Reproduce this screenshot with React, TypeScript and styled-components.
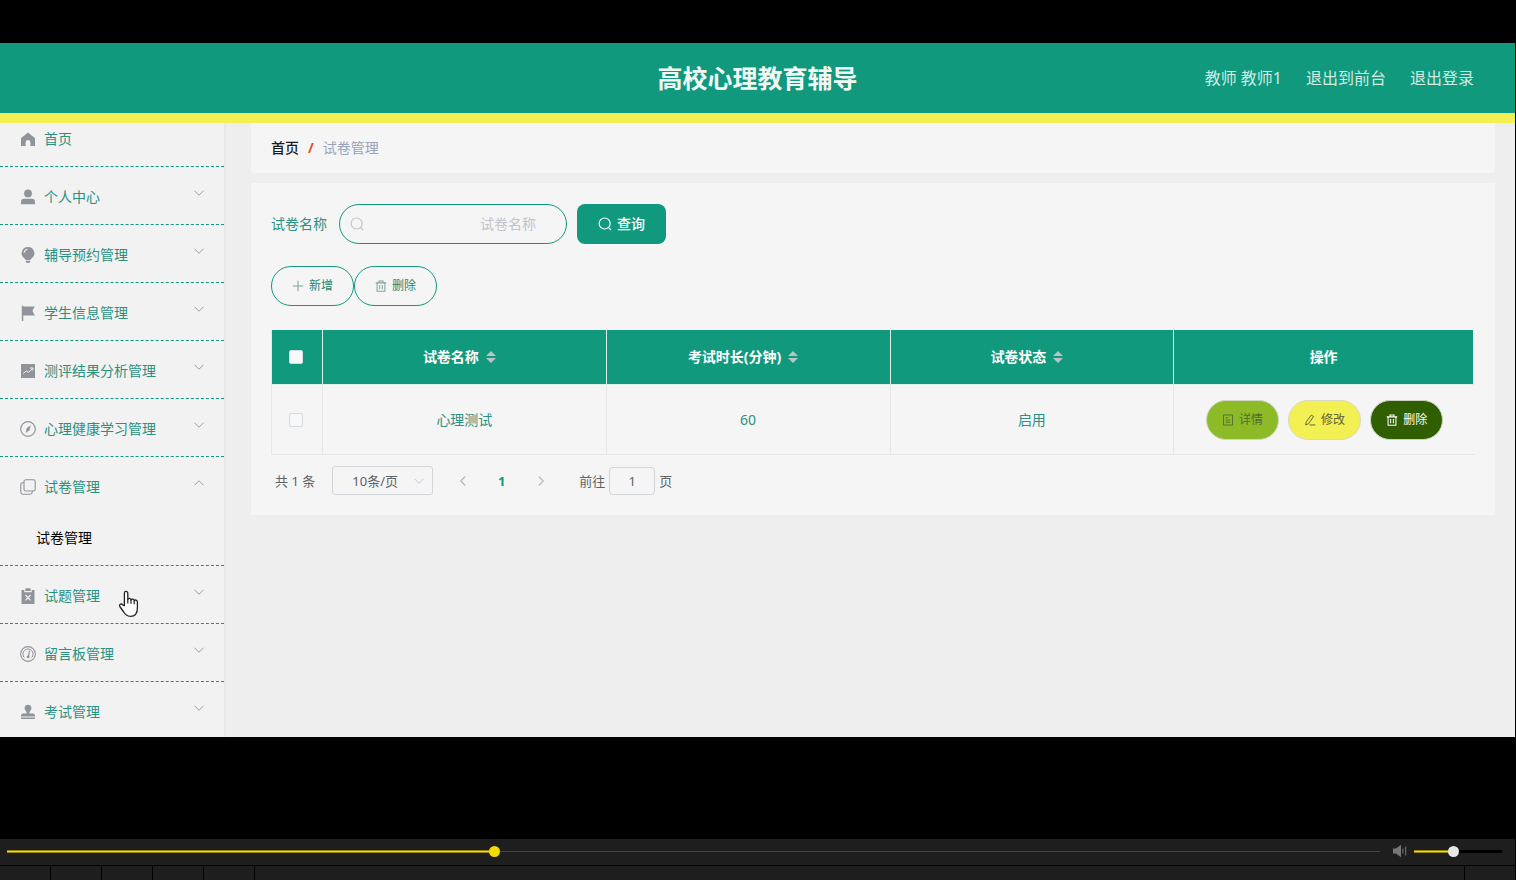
import React, { useState } from 'react';
import styled, { createGlobalStyle, css } from 'styled-components';

const green = '#11997e';
const textGreen = '#2b9080';

const GlobalStyle = createGlobalStyle`
  *, *::before, *::after { box-sizing: border-box; }
  body {
    margin: 0;
    background: #000;
    font-family: 'Noto Sans', 'Noto Sans CJK SC', sans-serif;
    font-size: 14px;
    line-height: 20px;
  }
  button, input, select { font: inherit; color: inherit; margin: 0; }
  button { cursor: pointer; }
`;

/* ---------- player shell ---------- */

const Player = styled.div`
  display: flex;
  flex-direction: column;
  min-height: 100vh;
  padding: 43px 1px 0 0;
  background: #000;
`;

const Stage = styled.div`
  flex: 1;
  padding-bottom: 40px;
`;

const Controls = styled.footer`
  background: #1e1e1e;
`;

const SeekRow = styled.div`
  display: flex;
  align-items: center;
  height: 27px;
  padding: 0 13px 2px 7px;
  border-bottom: 1px solid #000;
`;

const thumb = css<{ $thumb: string }>`
  appearance: none;
  width: 11px;
  height: 11px;
  margin-top: -4px;
  border: 0;
  border-radius: 50%;
  background: ${(p) => p.$thumb};
`;

const Slider = styled.input<{ $thumb: string; $rail: string }>`
  appearance: none;
  display: block;
  height: 12px;
  background: none;
  &::-webkit-slider-runnable-track {
    height: 3px;
    background:
      linear-gradient(#96870a 1px, #f5dc00 1px, #f5dc00 2px, #96870a 2px) 0 0 / var(--fill) 3px no-repeat,
      ${(p) => p.$rail};
  }
  &::-webkit-slider-thumb { ${thumb} }
`;

const Seek = styled(Slider)`
  flex: 1;
  min-width: 0;
`;

const Volume = styled(Slider)`
  width: 88px;
`;

const MuteButton = styled.button`
  display: flex;
  margin: 0 6px 0 12px;
  padding: 0;
  border: 0;
  background: none;
`;

const ToolRow = styled.div`
  display: flex;
  height: 14px;
`;

const ToolCell = styled.div`
  width: 51px;
  border-right: 1px solid #000;
`;

const ToolSpace = styled.div`
  flex: 1;
  border-right: 1px solid #000;
`;

const ToolEnd = styled.div`
  width: 50px;
`;

/* ---------- application ---------- */

const Header = styled.header`
  display: grid;
  grid-template-columns: 1fr auto 1fr;
  align-items: center;
  height: 80px;
  padding: 0 41px;
  border-bottom: 10px solid #f2f053;
  background: ${green};
  color: #f1f8f4;
`;

const Title = styled.h1`
  grid-column: 2;
  margin: 0;
  font-size: 25px;
  line-height: 36px;
  font-weight: 700;
`;

const HeaderLinks = styled.div`
  display: flex;
  justify-content: flex-end;
  gap: 24px;
  font-size: 16px;
  line-height: 24px;
  color: #d3ebe0;
  a { color: inherit; text-decoration: none; }
`;

const Body = styled.div`
  display: flex;
  background: #eeeeee;
`;

const Sidebar = styled.nav`
  width: 226px;
  flex: none;
  overflow: hidden;
  border-right: 2px solid #e6e9e9;
  background: #f2f2f2;
`;

const Menu = styled.ul`
  list-style: none;
  margin: -14px 0 -3px;
  padding: 0;
`;

const MenuItem = styled.li`
  position: relative;
  border-bottom: 1px dashed ${green};
`;

const MenuButton = styled.button`
  display: flex;
  align-items: center;
  gap: 8px;
  width: 100%;
  height: 57px;
  padding: 2px 19px 0 20px;
  border: 0;
  background: none;
  color: ${textGreen};
  text-align: left;
`;

const MenuLabel = styled.span`
  flex: 1;
`;

const MenuArrow = styled.span`
  display: flex;
  padding-bottom: 8px;
`;

const SubLink = styled.a`
  display: block;
  padding: 14px 36px 17px;
  color: #000;
  text-decoration: none;
`;

const Pointer = styled.svg`
  position: absolute;
  left: 118px;
  top: 24px;
`;

const Main = styled.main`
  flex: 1;
  min-width: 0;
  padding: 0 20px 20px 25px;
`;

const Crumbs = styled.nav`
  display: flex;
  gap: 9px;
  padding: 15px 20px;
  border-radius: 0 0 4px 4px;
  background: #f5f5f5;
  color: #97a3bb;
  a { color: #1c1c1c; font-weight: 500; text-decoration: none; }
`;

const Slash = styled.span`
  color: #e5501e;
  font-weight: 700;
`;

const Panel = styled.section`
  margin-top: 10px;
  padding: 21px 20px 20px;
  background: #f5f5f5;
`;

const SearchForm = styled.form`
  display: flex;
  align-items: center;
  gap: 10px;
  color: ${textGreen};
`;

const SearchLabel = styled.label`
  display: flex;
  align-items: center;
  gap: 12px;
`;

const SearchBox = styled.span`
  display: flex;
  align-items: center;
  width: 228px;
  height: 40px;
  padding: 0 30px 0 10px;
  border: 1px solid ${green};
  border-radius: 20px;
  color: #c0c4cc;
`;

const SearchInput = styled.input`
  flex: 1;
  min-width: 0;
  border: 0;
  outline: 0;
  background: none;
  text-align: right;
  padding: 0;
  &::placeholder { color: #c0c4cc; }
`;

const SearchButton = styled.button`
  display: flex;
  align-items: center;
  gap: 5px;
  height: 40px;
  padding: 0 21px;
  border: 0;
  border-radius: 8px;
  background: ${green};
  color: #fff;
  font-weight: 500;
`;

const Actions = styled.div`
  display: flex;
  margin: 22px 0 24px;
`;

const PillButton = styled.button<{ $bg?: string; $fg?: string; $line?: string; $pad?: number }>`
  display: inline-flex;
  align-items: center;
  gap: 5px;
  height: 40px;
  padding: 0 ${(p) => p.$pad ?? 20}px;
  border: 1px solid ${(p) => p.$line ?? green};
  border-radius: 20px;
  background: ${(p) => p.$bg ?? 'transparent'};
  color: ${(p) => p.$fg ?? '#1f8471'};
  font-size: 12px;
  line-height: 16px;
`;

const DataTable = styled.table`
  width: 100%;
  table-layout: fixed;
  border-collapse: separate;
  border-spacing: 0;
  border-left: 1px solid #e5e7e9;
  color: ${textGreen};
  text-align: center;
  th, td { padding: 0; border-right: 1px solid #e5e7e9; border-bottom: 1px solid #e5e7e9; }
  th:first-child, td:first-child { padding-right: 3px; }
  td:last-child { border-right: 0; }
  th { height: 55px; background: ${green}; color: #fff; font-weight: 700; border-color: #dcefeb; }
  th:last-child { border-right: 2px solid #f5f5f5; }
  td { height: 70px; }
`;

const HeadCell = styled.span`
  display: inline-flex;
  align-items: center;
  gap: 7px;
  padding-right: 10px;
`;

const SortButton = styled.button`
  display: flex;
  padding: 0;
  border: 0;
  background: none;
`;

const Tick = styled.input`
  appearance: none;
  display: block;
  width: 14px;
  height: 14px;
  margin: 0 auto;
  border: 1px solid #d6d9e0;
  border-radius: 2px;
  background: #f7f8f8;
`;

const RowActions = styled.div`
  display: flex;
  justify-content: center;
  gap: 9px;
`;

const Pager = styled.div`
  display: flex;
  align-items: center;
  margin-top: 11px;
  padding-left: 4px;
  color: #606266;
  font-size: 13px;
`;

const SizePicker = styled.span`
  display: flex;
  align-items: center;
  position: relative;
  width: 101px;
  margin: 0 10px 0 17px;
`;

const SizeSelect = styled.select`
  appearance: none;
  width: 100%;
  height: 29px;
  padding: 0 33px 0 18px;
  border: 1px solid #d3d5db;
  border-radius: 3px;
  background: none;
  text-align: center;
`;

const SizeArrow = styled.span`
  position: absolute;
  right: 8px;
  display: flex;
  pointer-events: none;
`;

const PageButton = styled.button<{ $current?: boolean }>`
  display: flex;
  align-items: center;
  justify-content: center;
  width: 39px;
  height: 28px;
  padding: 0;
  border: 0;
  background: none;
  color: ${(p) => (p.$current ? green : '#606266')};
  font-weight: ${(p) => (p.$current ? 700 : 400)};
`;

const Jump = styled.label`
  display: flex;
  align-items: center;
  gap: 4px;
  margin-left: 19px;
`;

const JumpInput = styled.input`
  width: 46px;
  height: 28px;
  padding: 0;
  border: 1px solid #d3d5db;
  border-radius: 4px;
  background: none;
  text-align: center;
`;

/* ---------- drawings ---------- */

type IconProps = { size?: number; children: React.ReactNode; color?: string };
const Icon = ({ size = 16, color = 'currentColor', children }: IconProps) => (
  <svg width={size} height={size} viewBox="0 0 16 16" fill="none" stroke={color} strokeWidth="1" aria-hidden="true">
    {children}
  </svg>
);

const grey = '#909399';

const menuIcons: Record<string, React.ReactNode> = {
  home: <path d="M8 1.5 15 7.2V15h-4.6v-3.6a2.4 2.4 0 0 0-4.8 0V15H1V7.2z" fill={grey} stroke="none" />,
  user: (
    <g fill={grey} stroke="none">
      <circle cx="8" cy="4.4" r="3.9" />
      <path d="M1 15.2v-2.4a3 3 0 0 1 3-3h8a3 3 0 0 1 3 3v2.4z" />
    </g>
  ),
  bulb: (
    <>
      <path d="M8 0a6.3 6.3 0 0 0-3.6 11.5c.8.6 1.2 1.1 1.4 1.8h4.4c.2-.7.6-1.2 1.4-1.8A6.3 6.3 0 0 0 8 0zM5.8 14h4.4v.7L9.2 16H6.8l-1-1.3z" fill={grey} stroke="none" />
      <path d="M4.1 5.6A4.1 4.1 0 0 1 7.4 2.3" stroke="#f2f2f2" strokeWidth="1.1" />
    </>
  ),
  flag: <path d="M1.8.7h1.5v.8h11.5l-2.4 4.3 2.4 4.7H3.3V16H1.8z" fill={grey} stroke="none" />,
  chart: (
    <>
      <path d="M1 1h14v14H1z" fill={grey} stroke="none" />
      <path d="m3.2 10.6 3-2.7 2.3 1.5 3.8-3.8M10 5h2.9v2.6" stroke="#f2f2f2" />
    </>
  ),
  compass: (
    <>
      <circle cx="8" cy="8" r="7.3" stroke={grey} strokeWidth="1.2" />
      <path d="m10.8 4.2-1.3 5.1-3.6 2.5.8-4.5z" fill={grey} stroke="none" />
    </>
  ),
  copy: (
    <g stroke={grey} strokeWidth="1.1">
      <rect x="4" y=".8" width="11.2" height="11.2" rx="1.8" />
      <path d="M4 3.7H2.7C1.6 3.7.8 4.5.8 5.6v7.7c0 1.1.8 1.9 1.9 1.9h7.6c1.1 0 1.9-.8 1.9-1.9V12" />
    </g>
  ),
  clip: (
    <>
      <path d="M1.5 2h2.8v2.2h7.4V2h2.8v14h-13z" fill={grey} stroke="none" />
      <path d="M5.4.3h5.2V3H5.4z" fill={grey} stroke="none" />
      <path d="m5.4 7 5.2 5.4M10.6 7l-5.2 5.4" stroke="#f2f2f2" strokeWidth="1.2" />
    </>
  ),
  meter: (
    <>
      <circle cx="8" cy="8" r="7.4" stroke={grey} strokeWidth="1.1" />
      <path d="M4.3 11.6A5.1 5.1 0 1 1 11.7 11.6" stroke={grey} />
      <path d="m9.5 4.6-.9 5.4" stroke={grey} strokeWidth="1.2" />
      <circle cx="8.1" cy="10.9" r="1.4" fill={grey} stroke="none" />
    </>
  ),
  stamp: (
    <path d="M8 .8a3.5 3.5 0 0 0-2 6.4c.5.5.6 1.2.5 2.3H3.2A2.200 2.200 0 0 0 1 11.700v.8h14v-.8a2.200 2.200 0 0 0-2.200-2.200H9.500c-.1-1.100 0-1.800.5-2.300A3.500 3.500 0 0 0 8 .8zM1 13.600h14V15H1z" fill={grey} stroke="none" />
  ),
};

const Down = ({ size = 12, color = grey }) => (
  <Icon size={size} color={color}><path d="m2 5 6 6 6-6" strokeWidth="1.2" /></Icon>
);
const Up = () => (
  <Icon size={12} color={grey}><path d="m2 11 6-6 6 6" strokeWidth="1.2" /></Icon>
);
const SearchIcon = () => (
  <Icon size={14}><circle cx="7.6" cy="7.4" r="6.3" strokeWidth="1.3" /><path d="m12 12 3 3" strokeWidth="1.3" /></Icon>
);
const Trash = ({ color = 'currentColor' }) => (
  <Icon size={12} color={color}>
    <path d="M1 3.8h14M5.3 3.5V1.2h5.4v2.3M2.8 4v11h10.4V4M6.2 6.8v5.4M9.8 6.8v5.4" strokeWidth="1.4" />
  </Icon>
);
const Plus = () => (
  <Icon size={12} color="#7fa79f"><path d="M8 1v14M1 8h14" strokeWidth="1.4" /></Icon>
);
const Doc = () => (
  <Icon size={12}><path d="M2 1.3h12v13.4H2zM5 5h3M5 8h6M5 11h6" strokeWidth="1.2" /></Icon>
);
const Pen = () => (
  <Icon size={12}><path d="m9.7 1.5 3 1.9-6.5 9.5-4 1.7.8-4.1zM7.5 14.6h7.7" strokeWidth="1.3" /></Icon>
);
const SortIcon = () => (
  <svg width="10" height="12" viewBox="0 0 10 12" fill="#b9c4c6" aria-hidden="true">
    <path d="M0 5 5 0l5 5zM0 7h10l-5 5z" />
  </svg>
);
const Speaker = () => (
  <svg width="16" height="14" viewBox="0 0 16 14" fill="#777" aria-hidden="true">
    <path d="M1 4.5h3L9 .8v12.4L4 9.5H1z" />
    <path d="M10.4 4.5h1v5h-1zM13.2 2.5h1v9h-1z" />
  </svg>
);

/* ---------- data ---------- */

const menu = [
  { icon: 'home', label: '首页' },
  { icon: 'user', label: '个人中心', sub: true },
  { icon: 'bulb', label: '辅导预约管理', sub: true },
  { icon: 'flag', label: '学生信息管理', sub: true },
  { icon: 'chart', label: '测评结果分析管理', sub: true },
  { icon: 'compass', label: '心理健康学习管理', sub: true },
  { icon: 'copy', label: '试卷管理', sub: true, open: '试卷管理' },
  { icon: 'clip', label: '试题管理', sub: true, hover: true },
  { icon: 'meter', label: '留言板管理', sub: true },
  { icon: 'stamp', label: '考试管理', sub: true },
];

const columns = ['试卷名称', '考试时长(分钟)', '试卷状态'];
const rows = [['心理测试', '60', '启用']];

const fill = (value: number) => ({ '--fill': `${value}%` }) as React.CSSProperties;

export default function App() {
  const [seek, setSeek] = useState(35.4);
  const [volume, setVolume] = useState(44);
  const [page, setPage] = useState('1');

  return (
    <Player>
      <GlobalStyle />
      <Stage>
        <Header>
          <Title>高校心理教育辅导</Title>
          <HeaderLinks>
            <span>教师 教师1</span>
            <a href="#front">退出到前台</a>
            <a href="#logout">退出登录</a>
          </HeaderLinks>
        </Header>
        <Body>
          <Sidebar>
            <Menu>
              {menu.map((item) => (
                <MenuItem key={item.label}>
                  <MenuButton type="button">
                    <Icon>{menuIcons[item.icon]}</Icon>
                    <MenuLabel>{item.label}</MenuLabel>
                    {item.sub && <MenuArrow>{item.open ? <Up /> : <Down />}</MenuArrow>}
                  </MenuButton>
                  {item.open && <SubLink href="#papers">{item.open}</SubLink>}
                  {item.hover && (
                    <Pointer width="22" height="28" viewBox="0 0 22 28" aria-hidden="true">
                      <path
                        d="M6.4 15.7V3.2c0-2.4 3.4-2.4 3.4 0v6.2c.3-1.5 3.2-1.3 3.2.6.6-1.4 3.2-1.1 3.2.8.7-1.3 3.2-.9 3.2 1.2v6c0 5-2.6 8.3-7 8.3-3.6 0-5.4-1.9-7-4.8L1.8 16.5c-.9-1.8 1-3.3 2.6-1.9z"
                        fill="#fff" stroke="#222" strokeWidth="1.3" strokeLinejoin="round"
                      />
                      <path d="M9.8 9v4.5M13 10v3.8M16.2 10.8v3.4" stroke="#222" strokeWidth="1.2" />
                    </Pointer>
                  )}
                </MenuItem>
              ))}
            </Menu>
          </Sidebar>
          <Main>
            <Crumbs>
              <a href="#home">首页</a>
              <Slash>/</Slash>
              <span>试卷管理</span>
            </Crumbs>
            <Panel>
              <SearchForm onSubmit={(e) => e.preventDefault()}>
                <SearchLabel>
                  试卷名称
                  <SearchBox>
                    <SearchIcon />
                    <SearchInput type="text" placeholder="试卷名称" />
                  </SearchBox>
                </SearchLabel>
                <SearchButton type="submit"><SearchIcon />查询</SearchButton>
              </SearchForm>
              <Actions>
                <PillButton type="button"><Plus />新增</PillButton>
                <PillButton type="button"><Trash color="#7fa79f" />删除</PillButton>
              </Actions>
              <DataTable>
                <colgroup>
                  <col style={{ width: 51 }} />
                  <col />
                  <col />
                  <col />
                  <col style={{ width: '25%' }} />
                </colgroup>
                <thead>
                  <tr>
                    <th scope="col"><Tick type="checkbox" aria-label="全选" /></th>
                    {columns.map((name) => (
                      <th key={name} scope="col">
                        <HeadCell>{name}<SortButton type="button" aria-label={`${name}排序`}><SortIcon /></SortButton></HeadCell>
                      </th>
                    ))}
                    <th scope="col">操作</th>
                  </tr>
                </thead>
                <tbody>
                  {rows.map((row) => (
                    <tr key={row[0]}>
                      <td><Tick type="checkbox" aria-label={row[0]} /></td>
                      {row.map((cell) => <td key={cell}>{cell}</td>)}
                      <td>
                        <RowActions>
                          <PillButton type="button" $pad={15} $bg="#8dbb27" $fg="#4f6b35" $line="#d0d6c4"><Doc />详情</PillButton>
                          <PillButton type="button" $pad={15} $bg="#f2f053" $fg="#606238" $line="#d9dac0"><Pen />修改</PillButton>
                          <PillButton type="button" $pad={15} $bg="#2f5f00" $fg="#fff" $line="#ccd4c4"><Trash />删除</PillButton>
                        </RowActions>
                      </td>
                    </tr>
                  ))}
                </tbody>
              </DataTable>
              <Pager>
                <span>共 1 条</span>
                <SizePicker>
                  <SizeSelect aria-label="每页条数" defaultValue="10">
                    <option value="10">10条/页</option>
                    <option value="20">20条/页</option>
                  </SizeSelect>
                  <SizeArrow><Down color="#c0c4cc" /></SizeArrow>
                </SizePicker>
                <PageButton type="button" aria-label="上一页">
                  <Icon size={12} color="#b4b8bf"><path d="M11 2 5 8l6 6" strokeWidth="1.6" /></Icon>
                </PageButton>
                <PageButton type="button" $current>1</PageButton>
                <PageButton type="button" aria-label="下一页">
                  <Icon size={12} color="#b4b8bf"><path d="m5 2 6 6-6 6" strokeWidth="1.6" /></Icon>
                </PageButton>
                <Jump>
                  前往
                  <JumpInput type="text" value={page} onChange={(e) => setPage(e.target.value)} />
                  页
                </Jump>
              </Pager>
            </Panel>
          </Main>
        </Body>
      </Stage>
      <Controls>
        <SeekRow>
          <Seek
            type="range" min="0" max="100" step="0.1" value={seek} aria-label="播放进度"
            onChange={(e) => setSeek(Number(e.target.value))}
            $thumb="#f5dc00" $rail="linear-gradient(#444, #444) 0 1px / 100% 1px no-repeat"
            style={fill(seek)}
          />
          <MuteButton type="button" aria-label="静音"><Speaker /></MuteButton>
          <Volume
            type="range" min="0" max="100" value={volume} aria-label="音量"
            onChange={(e) => setVolume(Number(e.target.value))}
            $thumb="#e8e8e8" $rail="#000"
            style={fill(volume)}
          />
        </SeekRow>
        <ToolRow>
          <ToolCell /><ToolCell /><ToolCell /><ToolCell /><ToolCell />
          <ToolSpace />
          <ToolEnd />
        </ToolRow>
      </Controls>
    </Player>
  );
}
